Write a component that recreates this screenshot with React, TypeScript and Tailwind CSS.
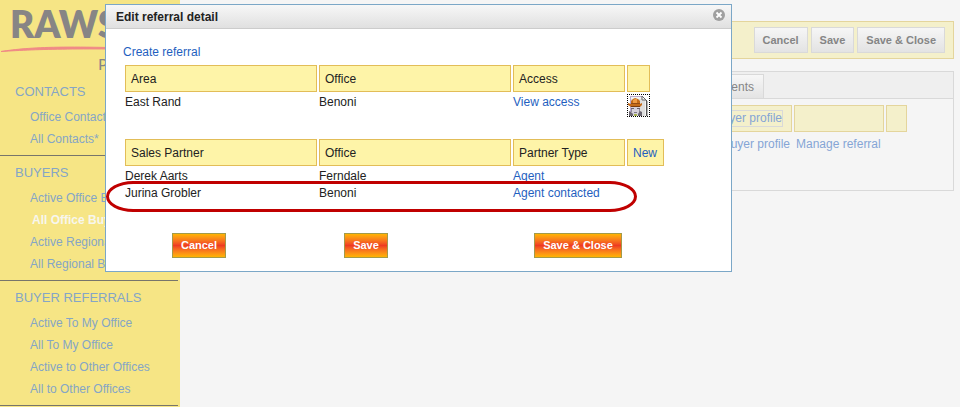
import clsx from "clsx";

type MenuItem = {
  label: string;
  selected?: boolean;
};

type MenuSection = {
  title: string;
  items: MenuItem[];
};

const menu: MenuSection[] = [
  {
    title: "CONTACTS",
    items: [{ label: "Office Contacts*" }, { label: "All Contacts*" }],
  },
  {
    title: "BUYERS",
    items: [
      { label: "Active Office B" },
      { label: "All Office Buyers", selected: true },
      { label: "Active Regional B" },
      { label: "All Regional B" },
    ],
  },
  {
    title: "BUYER REFERRALS",
    items: [
      { label: "Active To My Office" },
      { label: "All To My Office" },
      { label: "Active to Other Offices" },
      { label: "All to Other Offices" },
    ],
  },
];

const partners = [
  { name: "Derek Aarts", office: "Ferndale", type: "Agent" },
  { name: "Jurina Grobler", office: "Benoni", type: "Agent contacted" },
];

export default function App() {
  return (
    <div className="relative flex min-h-screen overflow-hidden bg-[#f5f5f5] font-['Liberation_Sans',Arial,sans-serif] text-xs text-[#222]">
      <Sidebar />
      <Workspace />
      <ReferralDialog />
    </div>
  );
}

function Sidebar() {
  return (
    <aside className="w-[180px] shrink-0 overflow-hidden bg-[#f6e585]">
      <Logo />
      <nav>
        {menu.map((section) => (
          <section
            key={section.title}
            className="mr-[2px] border-b border-[#77756b] pb-[5px]"
          >
            <h2 className="pt-[7px] pb-1 pl-[15px] text-[13px] leading-5 text-[#85a5c6]">
              {section.title}
            </h2>
            <ul>
              {section.items.map((item) => (
                <li
                  key={item.label}
                  className={clsx(
                    "whitespace-nowrap",
                    item.selected
                      ? "pl-[32px] leading-[22px] font-bold text-[#f7f6ee]"
                      : "pl-[30px] leading-[22px] text-[#85a5c6]"
                  )}
                >
                  <a href="#">{item.label}</a>
                </li>
              ))}
            </ul>
          </section>
        ))}
      </nav>
    </aside>
  );
}

function Logo() {
  return (
    <svg className="block h-[75px] w-[180px]" viewBox="0 0 180 75">
      <text
        x="10"
        y="38"
        fontFamily="Lato, sans-serif"
        fontSize="37"
        fontWeight="800"
        fill="#878585"
      >
        RAWS
      </text>
      <path d="M1 51.5C30 47 66 45 178 50C80 48 40 49 1 51.5Z" fill="#f08a86" stroke="#f08a86" />
      <text
        x="98"
        y="70"
        fontFamily="Lato, sans-serif"
        fontSize="16"
        fill="#878585"
      >
        P
      </text>
    </svg>
  );
}

function Workspace() {
  const headCell = "h-[27px] border border-[#e4d59c] bg-[#f4f0cb] p-0";

  return (
    <main className="min-w-0 flex-1 pt-[21px] pr-[6px] pl-[10px]">
      <div className="flex justify-end gap-[3px] border border-[#e4d59c] bg-[#f4f0cb] py-[5px] pr-2">
        <GreyButton label="Cancel" />
        <GreyButton label="Save" />
        <GreyButton label="Save & Close" />
      </div>

      <div className="mt-3 h-[120px] border border-[#d9d9d9]">
        <div className="flex justify-end border-b border-[#d9d9d9] bg-[#efefef] pt-[2px] pr-[189px]">
          <button className="h-6 border border-b-0 border-[#d9d9d9] bg-linear-to-b from-[#f7f7f7] to-[#e4e4e4] px-[9px] text-xs text-[#858585]">
            Documents
          </button>
        </div>
        <table className="mt-1 mr-[44px] ml-auto border-separate border-spacing-[2px] text-[#85a5d6]">
          <thead>
            <tr>
              <th className={clsx(headCell, "w-[90px] pr-2 text-right font-normal")}>
                <a href="#" className="inline-block border border-[#d9d9d9] leading-[15px] whitespace-nowrap">
                  Buyer profile
                </a>
              </th>
              <th className={clsx(headCell, "w-[90px]")} />
              <th className={clsx(headCell, "w-[21px]")} />
            </tr>
          </thead>
          <tbody>
            <tr>
              <td className="px-[2px] pt-[3px] text-right leading-[15px]">
                <a href="#">Buyer profile</a>
              </td>
              <td className="px-[2px] pt-[3px] leading-[15px] whitespace-nowrap">
                <a href="#">Manage referral</a>
              </td>
              <td />
            </tr>
          </tbody>
        </table>
      </div>
    </main>
  );
}

function GreyButton({ label }: { label: string }) {
  return (
    <button className="h-[26px] border border-[#d9d9d9] bg-linear-to-b from-[#f6f6f6] to-[#e3e3e3] px-2 text-[11px] font-bold text-[#858585]">
      {label}
    </button>
  );
}

function OrangeButton({ label }: { label: string }) {
  return (
    <button className="h-[25px] border border-[#a39a4a] bg-linear-to-b from-[#ffb400] via-[#ee3a22] to-[#ffb400] px-2 text-[11px] font-bold text-white">
      {label}
    </button>
  );
}

function HeadCell({ children }: { children?: React.ReactNode }) {
  return (
    <th className="h-[27px] border border-[#e2bd58] bg-[#fef4a8] px-[5px] pt-[2px] pb-0 text-left font-normal">
      {children}
    </th>
  );
}

function Cell({ children }: { children?: React.ReactNode }) {
  return <td className="pt-px leading-[14px]">{children}</td>;
}

function ReferralDialog() {
  return (
    <div
      role="dialog"
      aria-labelledby="dialog-title"
      className="absolute top-1 left-[105px] w-[627px] border border-[#7ba7c7] bg-white"
    >
      <header className="flex h-6 items-center justify-between border-b border-[#cccccc] bg-linear-to-b from-[#f7f7f7] to-[#e0e0e0] pt-px pr-[6px] pl-[10px]">
        <h1 id="dialog-title" className="text-xs font-bold">
          Edit referral detail
        </h1>
        <button aria-label="Close" className="mb-[5px]">
          <svg className="size-3" viewBox="0 0 12 12">
            <circle cx="6" cy="6" r="6" fill="#a0a0a0" />
            <path d="M3.5 3.5L8.5 8.5M8.5 3.5L3.5 8.5" stroke="#fff" strokeWidth="1.8" />
          </svg>
        </button>
      </header>

      <div className="px-[17px] pt-4 pb-[13px] leading-[15px]">
        <a href="#" className="block text-[#1f5fc0]">
          Create referral
        </a>

        <table className="mt-[3px] table-fixed border-separate border-spacing-[2px]">
          <colgroup>
            <col className="w-[192px]" />
            <col className="w-[192px]" />
            <col className="w-[112px]" />
            <col className="w-[23px]" />
          </colgroup>
          <thead>
            <tr>
              <HeadCell>Area</HeadCell>
              <HeadCell>Office</HeadCell>
              <HeadCell>Access</HeadCell>
              <HeadCell />
            </tr>
          </thead>
          <tbody className="align-top">
            <tr>
              <Cell>East Rand</Cell>
              <Cell>Benoni</Cell>
              <Cell>
                <a href="#" className="text-[#1f5fc0]">
                  View access
                </a>
              </Cell>
              <td>
                <button
                  aria-label="Referral access"
                  className="block size-[23px] border border-dotted border-black"
                >
                  <AgentIcon />
                </button>
              </td>
            </tr>
          </tbody>
        </table>

        <table className="mt-[18px] table-fixed border-separate border-spacing-[2px]">
          <colgroup>
            <col className="w-[192px]" />
            <col className="w-[192px]" />
            <col className="w-[112px]" />
            <col className="w-[37px]" />
          </colgroup>
          <thead>
            <tr>
              <HeadCell>Sales Partner</HeadCell>
              <HeadCell>Office</HeadCell>
              <HeadCell>Partner Type</HeadCell>
              <HeadCell>
                <a href="#" className="text-[#1f5fc0]">
                  New
                </a>
              </HeadCell>
            </tr>
          </thead>
          <tbody>
            {partners.map((partner) => (
              <tr key={partner.name}>
                <Cell>{partner.name}</Cell>
                <Cell>{partner.office}</Cell>
                <Cell>
                  <a href="#" className="text-[#1f5fc0]">
                    {partner.type}
                  </a>
                </Cell>
                <Cell />
              </tr>
            ))}
          </tbody>
        </table>

        <div className="mt-[31px] grid grid-cols-[152px_182px_242px] justify-items-center">
          <OrangeButton label="Cancel" />
          <OrangeButton label="Save" />
          <OrangeButton label="Save & Close" />
        </div>
      </div>

      {/* highlight ring around the contacted agent */}
      <div className="pointer-events-none absolute top-[176px] left-0 h-[31px] w-[531px] rounded-[28px/16px] border-[3px] border-[#c00000]" />
    </div>
  );
}

function AgentIcon() {
  return (
    <svg className="block size-[21px]" viewBox="0 0 21 21">
      <path d="M2 1H14L18 5V21H2Z" fill="#dedede" />
      <path d="M2 1H14V2H3V20H2Z" fill="#b9a9cf" />
      <path d="M3 2H13V4H3Z" fill="#f3f3f3" />
      <path d="M14 1L18 5H14Z" fill="#fff" stroke="#666" strokeWidth="1" />
      <path d="M17 6H18V21H17Z" fill="#f4f4f4" />
      <path d="M18 5H19V21H18Z" fill="#555" />
      <path d="M19 6H20V21H19Z" fill="#b5b5b5" />
      <path d="M3 11H12V16L10 20H5L3 16Z" fill="#d5d0da" />
      <path d="M3 13H6V14H3ZM9 13H12V14H9Z" fill="#6a6472" />
      <path d="M3 14H4V17H3ZM11 14H12V17H11Z" fill="#8f8a97" />
      <path d="M1 16L3 17L5 19V21H1ZM12 16L14 17V21H10V19Z" fill="#6b6671" />
      <path d="M6 17H9V18H6Z" fill="#7c7782" />
      <path d="M6 19H9V21H6Z" fill="#a5b04d" />
      <path d="M0 8L3 9V6L5 4L7 3L10 4L12 6V9L14 8V10L12 12H3L0 10Z" fill="#c56b19" />
      <path d="M5 5L7 4H9V8H5Z" fill="#ef9d45" />
      <path d="M3 8H12V9H3Z" fill="#954c12" />
      <path d="M3 11H12V12H3Z" fill="#7a3c0e" />
    </svg>
  );
}
